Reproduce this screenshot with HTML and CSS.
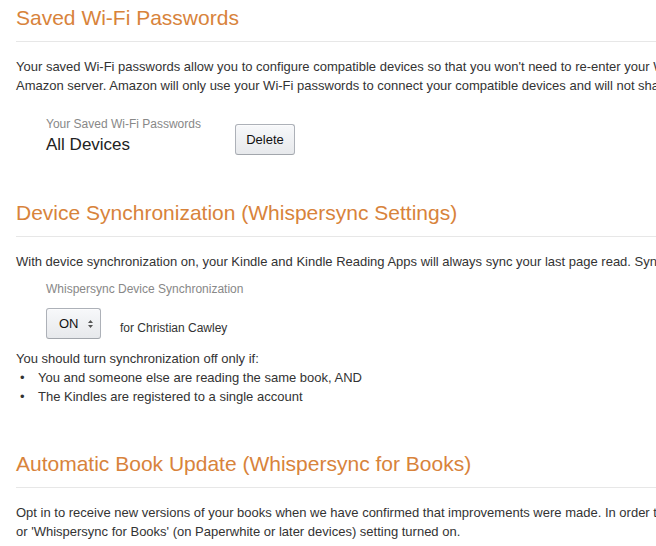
FILE: index.html
```html
<!DOCTYPE html>
<html>
<head>
<meta charset="utf-8">
<link rel="stylesheet" href="styles.css">
</head>
<body>
<div class="page">
  <section class="section first">
    <h2 class="heading">Saved Wi-Fi Passwords</h2>
    <p class="text">
      <span class="line">Your saved Wi-Fi passwords allow you to configure compatible devices so that you won't need to re-enter your Wi-Fi password on each device. Your Wi-Fi passwords will be sent over a secured connection and stored in an encrypted file on an</span>
      <span class="line">Amazon server. Amazon will only use your Wi-Fi passwords to connect your compatible devices and will not share them with any third party without your permission.</span>
    </p>
    <div class="wifi-row">
      <div class="wifi-info">
        <div class="label">Your Saved Wi-Fi Passwords</div>
        <div class="value">All Devices</div>
      </div>
      <button class="btn">Delete</button>
    </div>
  </section>

  <section class="section">
    <h2 class="heading">Device Synchronization (Whispersync Settings)</h2>
    <p class="text">
      <span class="line">With device synchronization on, your Kindle and Kindle Reading Apps will always sync your last page read. Synchronization also works for notes, highlights and bookmarks.</span>
    </p>
    <div class="sync-block">
      <div class="label">Whispersync Device Synchronization</div>
      <div class="sync-row">
        <div class="select">
          <span class="select-text">ON</span>
          <svg class="select-arrows" width="5" height="8" viewBox="0 0 5 8"><path d="M2.5 0 L5 3 L0 3 Z M0 5 L5 5 L2.5 8 Z" fill="#555"/></svg>
        </div>
        <span class="owner">for Christian Cawley</span>
      </div>
    </div>
    <p class="text note">You should turn synchronization off only if:</p>
    <ul class="bullets">
      <li class="bullet">You and someone else are reading the same book, AND</li>
      <li class="bullet">The Kindles are registered to a single account</li>
    </ul>
  </section>

  <section class="section">
    <h2 class="heading">Automatic Book Update (Whispersync for Books)</h2>
    <p class="text">
      <span class="line">Opt in to receive new versions of your books when we have confirmed that improvements were made. In order to receive updates, your device must have 'Annotations Backup'</span>
      <span class="line">or 'Whispersync for Books' (on Paperwhite or later devices) setting turned on.</span>
    </p>
  </section>
</div>
</body>
</html>
```

FILE: styles.css
```css
html, body {
  margin: 0;
  padding: 0;
  background: #fff;
  overflow: hidden;
}

.page {
  width: 656px;
  height: 546px;
  overflow: hidden;
  padding-left: 16px;
  box-sizing: border-box;
  font-family: "Liberation Sans", Arial, sans-serif;
  color: #333;
}

.section {
  margin-top: 45px;
  width: 1100px;
}

.section.first {
  margin-top: 5px;
}

.heading {
  margin: 0;
  font-size: 21px;
  line-height: 25px;
  font-weight: normal;
  color: #d8833b;
  padding-bottom: 11px;
  border-bottom: 1px solid #e7e7e7;
  white-space: nowrap;
}

.text {
  margin: 15px 0 0 0;
  font-size: 13px;
  line-height: 19px;
  white-space: nowrap;
}

.line {
  display: block;
}

.wifi-row {
  display: flex;
  align-items: flex-end;
  gap: 34px;
  margin-top: 21px;
  padding-left: 30px;
}

.label {
  font-size: 12px;
  line-height: 16px;
  color: #888;
}

.value {
  margin-top: 3px;
  font-size: 17px;
  line-height: 20px;
  color: #222;
}

.btn {
  width: 60px;
  height: 31px;
  margin: 0;
  padding: 0;
  font-family: "Liberation Sans", Arial, sans-serif;
  font-size: 13px;
  color: #111;
  background: linear-gradient(#f7f8fa, #e7e9ec);
  border: 1px solid #adb1b8;
  border-bottom-color: #a2a6ac;
  border-radius: 3px;
  box-shadow: inset 0 1px 0 rgba(255, 255, 255, 0.6);
}

.sync-block {
  margin-top: 10px;
  padding-left: 30px;
}

.sync-row {
  display: flex;
  align-items: flex-end;
  gap: 19px;
  margin-top: 11px;
}

.select {
  display: flex;
  align-items: center;
  box-sizing: border-box;
  width: 55px;
  height: 31px;
  padding-left: 12px;
  gap: 9px;
  font-size: 13px;
  color: #111;
  background: linear-gradient(#f7f8fa, #e7e9ec);
  border: 1px solid #adb1b8;
  border-bottom-color: #a2a6ac;
  border-radius: 3px;
  box-shadow: inset 0 1px 0 rgba(255, 255, 255, 0.6);
}

.select-arrows {
  display: block;
}

.owner {
  font-size: 12px;
  line-height: 16px;
  padding-bottom: 3px;
  color: #333;
}

.note {
  margin-top: 10px;
}

.bullets {
  margin: 0;
  padding: 0;
  list-style: none;
  font-size: 13px;
  line-height: 19px;
}

.bullet {
  display: flex;
  white-space: nowrap;
}

.bullet::before {
  content: "\2022";
  box-sizing: border-box;
  width: 22px;
  padding-left: 4px;
  flex: none;
}
```
